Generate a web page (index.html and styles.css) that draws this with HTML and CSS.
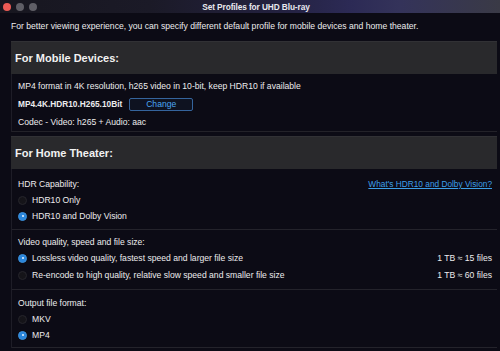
FILE: index.html
```html
<!DOCTYPE html>
<html>
<head>
<meta charset="utf-8">
<link rel="stylesheet" href="styles.css">
</head>
<body>
<div class="titlebar">
  <div class="lights">
    <span class="light red"></span>
    <span class="light gray"></span>
    <span class="light gray"></span>
  </div>
  <div class="title">Set Profiles for UHD Blu-ray</div>
  <div></div>
</div>
<div class="intro">For better viewing experience, you can specify different default profile for mobile devices and home theater.</div>

<section class="panel">
  <div class="panel-head">For Mobile Devices:</div>
  <div class="panel-body mobile">
    <div class="row">MP4 format in 4K resolution, h265 video in 10-bit, keep HDR10 if available</div>
    <div class="row"><b class="profile">MP4.4K.HDR10.H265.10Bit</b><button class="change">Change</button></div>
    <div class="row">Codec - Video: h265 + Audio: aac</div>
  </div>
</section>

<section class="panel second">
  <div class="panel-head">For Home Theater:</div>
  <div class="panel-body">
    <div class="group g1">
      <div class="row split"><span>HDR Capability:</span><a class="link" href="#">What's HDR10 and Dolby Vision?</a></div>
      <div class="row"><span class="radio"></span>HDR10 Only</div>
      <div class="row"><span class="radio on"></span>HDR10 and Dolby Vision</div>
    </div>
    <div class="group g2">
      <div class="row">Video quality, speed and file size:</div>
      <div class="row split"><span class="opt"><span class="radio on"></span>Lossless video quality, fastest speed and larger file size</span><span>1 TB ≈ 15 files</span></div>
      <div class="row split"><span class="opt"><span class="radio"></span>Re-encode to high quality, relative slow speed and smaller file size</span><span>1 TB ≈ 60 files</span></div>
    </div>
    <div class="group g3">
      <div class="row">Output file format:</div>
      <div class="row"><span class="radio"></span>MKV</div>
      <div class="row"><span class="radio on"></span>MP4</div>
    </div>
  </div>
</section>
</body>
</html>
```
FILE: styles.css
```css
* { box-sizing: border-box; }
html, body { margin: 0; padding: 0; }
body {
  width: 500px;
  height: 351px;
  overflow: hidden;
  background: #0c0b15;
  color: #ececee;
  font-family: "Liberation Sans", Arial, sans-serif;
  font-size: 8.6px;
}
.titlebar {
  height: 13px;
  display: grid;
  grid-template-columns: 1fr auto 1fr;
  align-items: center;
  background: linear-gradient(90deg, #17161f 0%, #1b1a27 30%, #23213f 55%, #2c2a55 70%, #34335a 80%, #3a3a46 100%);
}
.lights { display: flex; gap: 5px; padding-left: 3px; }
.light { width: 8px; height: 8px; border-radius: 50%; display: block; }
.light.red { background: #ec5b55; }
.light.gray { background: #5f5e66; }
.title { font-size: 8.3px; color: #e8e8ee; font-weight: bold; letter-spacing: -0.1px; margin-left: 12px; }
.intro {
  padding: 8px 0 0 11px;
  height: 28px;
  line-height: 10px;
}
.panel { margin: 0 3px 0 11px; }
.panel.second { margin-top: 4px; }
.panel-head {
  height: 33px;
  background: #29292c;
  border-top: 1px solid #313135;
  font-weight: bold;
  font-size: 11px;
  padding-left: 4px;
  display: flex;
  align-items: center;
  color: #f2f2f2;
}
.panel-body {
  border-left: 1px solid #1e1d27;
}
.mobile {
  padding: 3px 0 0 6px;
  border-bottom: 1px solid #232229;
}
.row {
  height: 18px;
  display: flex;
  align-items: center;
}
.profile { font-size: 8.3px; }
.change {
  margin-left: 7px;
  width: 64px;
  height: 13px;
  background: #0e1220;
  border: 1px solid #35649c;
  border-radius: 2px;
  color: #4ba6f2;
  font-family: inherit;
  font-size: 8.6px;
  padding: 0;
  line-height: 11px;
}
.group {
  padding-left: 6px;
  padding-right: 5px;
  border-bottom: 1px solid #24232b;
}
.group .row { height: 16px; }
.g1 { padding-top: 7px; padding-bottom: 5px; }
.g2 { padding-top: 4px; padding-bottom: 5px; }
.g2 .row:last-child { height: 18px; }
.g3 { padding-top: 5px; padding-bottom: 4px; }
.split { justify-content: space-between; }
.opt { display: flex; align-items: center; }
.link { color: #3d9fe8; text-decoration: underline; font-size: 8.3px; }
.radio {
  width: 9px;
  height: 9px;
  border-radius: 50%;
  background: #151419;
  border: 1px solid #26252c;
  margin-right: 5px;
  flex: none;
  position: relative;
}
.radio.on {
  background: #2a86dc;
  border-color: #3c8fd8;
}
.radio.on::after {
  content: "";
  position: absolute;
  left: 2.5px;
  top: 2.5px;
  width: 2px;
  height: 2px;
  border-radius: 50%;
  background: #eaf4ff;
}
```
